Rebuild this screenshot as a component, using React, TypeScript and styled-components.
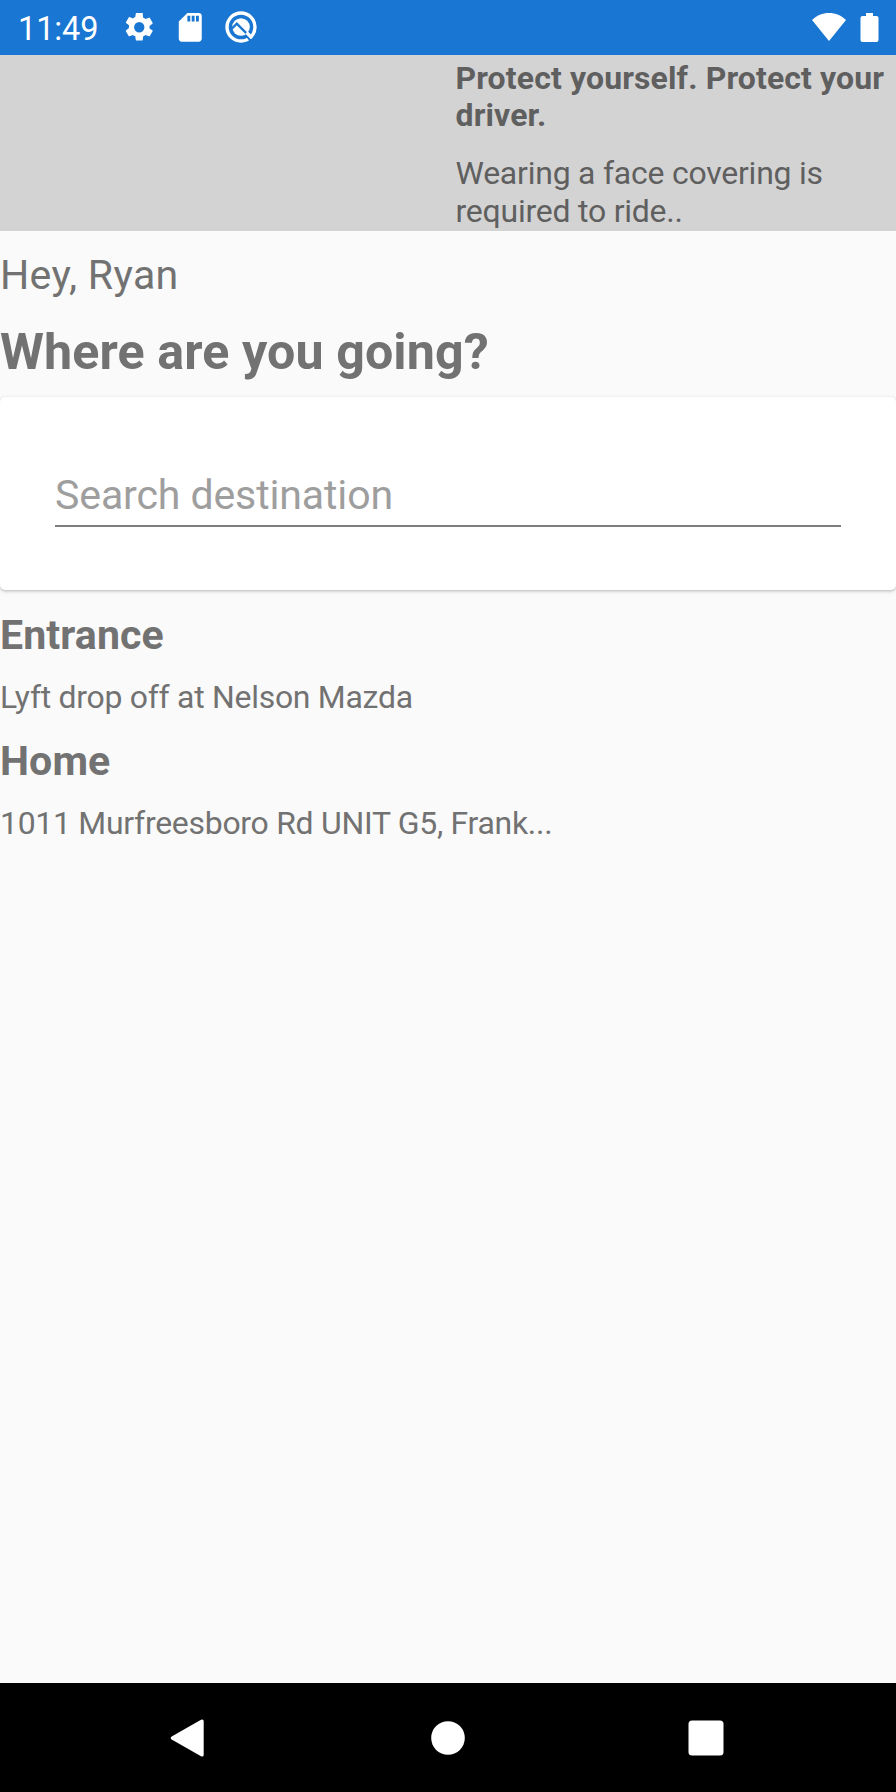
import React from "react";
import styled, { createGlobalStyle } from "styled-components";

const GlobalStyle = createGlobalStyle`
  * { box-sizing: border-box; }
  html, body { margin: 0; padding: 0; background: #fafafa; }
  body { font-family: Roboto, "Liberation Sans", sans-serif; color: #727272; }
`;

const Screen = styled.div`
  width: 896px;
  height: 1792px;
  display: flex;
  flex-direction: column;
  background: #fafafa;
  overflow: hidden;
`;

const StatusBar = styled.header`
  flex: none;
  height: 54.6px;
  padding: 0 17.5px 0 18px;
  display: flex;
  align-items: center;
  justify-content: space-between;
  background: #1976d2;
  color: #fff;
`;

const StatusGroup = styled.div<{ $gap: number }>`
  display: flex;
  align-items: center;
  gap: ${(p) => p.$gap}px;
`;

const Clock = styled.span`
  width: 87.5px;
  font-size: 32.5px;
  line-height: 54px;
  padding-top: 3px;
  letter-spacing: -0.1px;
`;

const Icon = styled.svg`
  display: block;
  fill: #fff;
`;

const Banner = styled.section`
  flex: none;
  height: 176.9px;
  padding: 5px 0 0 455.5px;
  background: #d3d3d3;
  color: #5f5f5f;
`;

const BannerText = styled.p<{ $bold?: boolean }>`
  margin: 0 0 19.8px;
  font-size: 31.95px;
  line-height: 37.8px;
  font-weight: ${(p) => (p.$bold ? 700 : 400)};
  letter-spacing: ${(p) => (p.$bold ? 0.15 : -0.21)}px;
`;

const Main = styled.main`
  flex: 1;
  min-height: 0;
`;

const Greeting = styled.p`
  margin: 19.5px 0 23px;
  font-size: 41.07px;
  line-height: 48px;
  letter-spacing: 0.3px;
`;

const Heading = styled.h1`
  margin: 0 0 15.7px;
  font-size: 50.2px;
  line-height: 59px;
  font-weight: 700;
  letter-spacing: 0.1px;
`;

const SearchCard = styled.section`
  height: 193.5px;
  padding: 73px 55px 0;
  background: #fff;
  border-radius: 5px;
  box-shadow: 0 1px 3px rgba(0, 0, 0, 0.24), 0 2px 6px rgba(0, 0, 0, 0.05);
`;

const SearchInput = styled.input`
  display: block;
  width: 100%;
  height: 57px;
  padding: 1px 0 6px;
  border: 0;
  border-bottom: 2px solid #7d7d7d;
  outline: 0;
  background: transparent;
  font: 400 41.07px/48px Roboto, "Liberation Sans", sans-serif;
  letter-spacing: -0.13px;
  &::placeholder { color: #9e9e9e; opacity: 1; }
`;

const Places = styled.ul`
  margin: 20.6px 0 0;
  padding: 0;
  list-style: none;
  display: flex;
  flex-direction: column;
  gap: 21px;
`;

const PlaceName = styled.h2`
  margin: 0 0 19px;
  font-size: 41.07px;
  line-height: 48px;
  font-weight: 700;
  letter-spacing: 0.12px;
`;

const PlaceDetail = styled.p`
  margin: 0;
  font-size: 31.95px;
  line-height: 38px;
  letter-spacing: -0.27px;
`;

const NavBar = styled.nav`
  flex: none;
  height: 109.2px;
  padding: 0.5px 172.5px 0 170px;
  display: flex;
  align-items: center;
  justify-content: space-between;
  background: #000;
`;

const NavButton = styled.button`
  padding: 0;
  border: 0;
  background: none;
`;

const HomeButton = styled(NavButton)`
  padding-left: 4.5px;
`;

const places = [
  { name: "Entrance", detail: "Lyft drop off at Nelson Mazda" },
  { name: "Home", detail: "1011 Murfreesboro Rd UNIT G5, Frank..." },
];

export default function App() {
  return (
    <>
      <GlobalStyle />
      <Screen>
        <StatusBar>
          <StatusGroup $gap={16.5}>
            <Clock>11:49</Clock>
            <Icon width="34.5" height="34.5" viewBox="0 0 24 24">
              <path d="M19.14 12.94c.04-.3.06-.61.06-.94s-.02-.64-.07-.94l2.03-1.58a.49.49 0 0 0 .12-.61l-1.92-3.32a.49.49 0 0 0-.59-.22l-2.39.96a7 7 0 0 0-1.62-.94l-.36-2.54A.48.48 0 0 0 13.92 2h-3.84a.48.48 0 0 0-.48.41l-.36 2.54c-.59.24-1.13.57-1.62.94l-2.39-.96a.48.48 0 0 0-.59.22L2.73 8.47a.48.48 0 0 0 .12.61l2.03 1.58c-.05.3-.08.63-.08.94s.02.64.07.94l-2.03 1.58a.49.49 0 0 0-.12.61l1.92 3.32c.12.22.37.29.59.22l2.39-.96c.5.38 1.03.7 1.62.94l.36 2.54c.05.24.25.41.49.41h3.84c.24 0 .44-.17.47-.41l.36-2.54a7 7 0 0 0 1.62-.94l2.39.96c.22.08.47 0 .59-.22l1.92-3.32a.48.48 0 0 0-.12-.61zM12 15.6a3.6 3.6 0 1 1 0-7.2 3.6 3.6 0 0 1 0 7.2z" />
            </Icon>
            <Icon width="34.5" height="34.5" viewBox="0 0 24 24">
              <path d="M18 2h-8L4.02 8 4 20c0 1.1.9 2 2 2h12c1.1 0 2-.9 2-2V4c0-1.1-.9-2-2-2zm-6 6h-2V4h2v4zm3 0h-2V4h2v4zm3 0h-2V4h2v4z" />
            </Icon>
            <Icon width="34" height="34" viewBox="0 0 34 34">
              <circle cx="17" cy="17" r="14" fill="none" stroke="#fff" strokeWidth="3.4" />
              <circle cx="17" cy="17" r="8.8" />
              <path d="M7 19.5 12.8 13.7 24.5 25.4" fill="none" stroke="#1976d2" strokeWidth="2.3" />
              <path d="M22.5 25.5 27.5 31.5" fill="none" stroke="#1976d2" strokeWidth="2.4" />
              <path d="M22.5 22.5 28 28" fill="none" stroke="#fff" strokeWidth="3.2" />
            </Icon>
          </StatusGroup>
          <StatusGroup $gap={13.5}>
            <Icon width="34" height="28" viewBox="0 0 34 28">
              <path d="M17 28 0 7C4.6 2.6 10.5 0 17 0s12.4 2.6 17 7z" />
            </Icon>
            <Icon width="19" height="29" viewBox="0 0 19 29">
              <path d="M6 0h7v3h3.5a2 2 0 0 1 2 2v22a2 2 0 0 1-2 2h-14a2 2 0 0 1-2-2V5a2 2 0 0 1 2-2H6z" />
            </Icon>
          </StatusGroup>
        </StatusBar>
        <Banner>
          <BannerText $bold>Protect yourself. Protect your driver.</BannerText>
          <BannerText>Wearing a face covering is required to ride..</BannerText>
        </Banner>
        <Main>
          <Greeting>Hey, Ryan</Greeting>
          <Heading>Where are you going?</Heading>
          <SearchCard>
            <SearchInput placeholder="Search destination" />
          </SearchCard>
          <Places>
            {places.map((p) => (
              <li key={p.name}>
                <PlaceName>{p.name}</PlaceName>
                <PlaceDetail>{p.detail}</PlaceDetail>
              </li>
            ))}
          </Places>
        </Main>
        <NavBar>
          <NavButton aria-label="Back">
            <Icon width="34" height="38" viewBox="0 0 34 38">
              <path d="M1.7 17.4 31 .7Q33.5-.3 33.7 2v34q-.2 2.3-2.7 1.3L1.7 20.6Q-.3 19 1.7 17.4z" />
            </Icon>
          </NavButton>
          <HomeButton aria-label="Home">
            <Icon width="34" height="34" viewBox="0 0 34 34">
              <circle cx="17" cy="17" r="16.8" />
            </Icon>
          </HomeButton>
          <NavButton aria-label="Recent apps">
            <Icon width="36" height="36" viewBox="0 0 36 36">
              <rect x=".5" y=".5" width="35" height="35" rx="3.5" />
            </Icon>
          </NavButton>
        </NavBar>
      </Screen>
    </>
  );
}
